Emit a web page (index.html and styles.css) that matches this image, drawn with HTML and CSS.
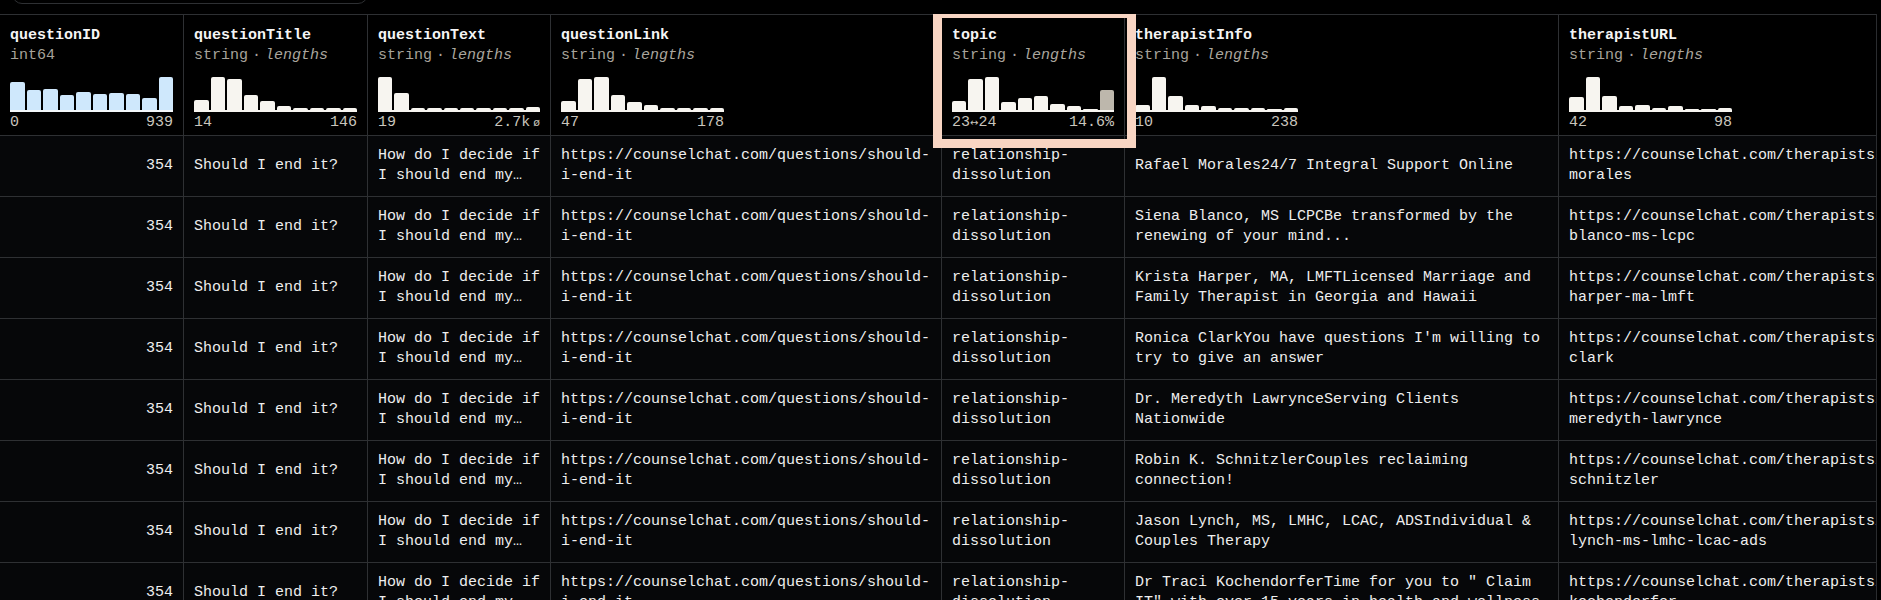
FILE: index.html
```html
<!DOCTYPE html>
<html lang="en">
<head>
<meta charset="utf-8">
<title>Dataset viewer</title>
<link rel="stylesheet" href="styles.css">
</head>
<body>
<div class="toolbar"><div class="search"></div></div>
<div class="viewer">
  <div class="table">
    <!-- header -->
    <div class="hcell">
      <div class="title">questionID</div>
      <div class="type">int64</div>
      <div class="hist blue">
        <i style="height:28px"></i><i style="height:20px"></i><i style="height:21px"></i><i style="height:15px"></i><i style="height:18px"></i><i style="height:16px"></i><i style="height:17px"></i><i style="height:16px"></i><i style="height:12px"></i><i style="height:33px"></i>
      </div>
      <div class="range"><span>0</span><span>939</span></div>
    </div>
    <div class="hcell">
      <div class="title">questionTitle</div>
      <div class="type">string<span class="sep">·</span><em>lengths</em></div>
      <div class="hist">
        <i style="height:10px"></i><i style="height:33px"></i><i style="height:31px"></i><i style="height:15px"></i><i style="height:9px"></i><i style="height:4px"></i><i style="height:2px"></i><i style="height:2px"></i><i style="height:2px"></i><i style="height:2px"></i>
      </div>
      <div class="range"><span>14</span><span>146</span></div>
    </div>
    <div class="hcell">
      <div class="title">questionText</div>
      <div class="type">string<span class="sep">·</span><em>lengths</em></div>
      <div class="hist">
        <i style="height:33px"></i><i style="height:17px"></i><i style="height:2px"></i><i style="height:2px"></i><i style="height:2px"></i><i style="height:2px"></i><i style="height:2px"></i><i style="height:2px"></i><i style="height:2px"></i><i style="height:3px"></i>
      </div>
      <div class="range"><span>19</span><span>2.7k<small class="null">ø</small></span></div>
    </div>
    <div class="hcell">
      <div class="title">questionLink</div>
      <div class="type">string<span class="sep">·</span><em>lengths</em></div>
      <div class="hist">
        <i style="height:9px"></i><i style="height:31px"></i><i style="height:33px"></i><i style="height:15px"></i><i style="height:8px"></i><i style="height:5px"></i><i style="height:2px"></i><i style="height:2px"></i><i style="height:2px"></i><i style="height:2px"></i>
      </div>
      <div class="range"><span>47</span><span>178</span></div>
    </div>
    <div class="hcell">
      <div class="title">topic</div>
      <div class="type">string<span class="sep">·</span><em>lengths</em></div>
      <div class="hist">
        <i style="height:9px"></i><i style="height:31px"></i><i style="height:33px"></i><i style="height:8px"></i><i style="height:12px"></i><i style="height:14px"></i><i style="height:6px"></i><i style="height:4px"></i><i style="height:1px"></i><i class="muted" style="height:20px"></i>
      </div>
      <div class="range"><span>23<small class="arrow">↔</small>24</span><span>14.6%</span></div>
    </div>
    <div class="hcell">
      <div class="title">therapistInfo</div>
      <div class="type">string<span class="sep">·</span><em>lengths</em></div>
      <div class="hist">
        <i style="height:5px"></i><i style="height:33px"></i><i style="height:14px"></i><i style="height:5px"></i><i style="height:4px"></i><i style="height:2px"></i><i style="height:2px"></i><i style="height:2px"></i><i style="height:1px"></i><i style="height:2px"></i>
      </div>
      <div class="range"><span>10</span><span>238</span></div>
    </div>
    <div class="hcell">
      <div class="title">therapistURL</div>
      <div class="type">string<span class="sep">·</span><em>lengths</em></div>
      <div class="hist">
        <i style="height:13px"></i><i style="height:33px"></i><i style="height:14px"></i><i style="height:4px"></i><i style="height:5px"></i><i style="height:2px"></i><i style="height:4px"></i><i style="height:1px"></i><i style="height:1px"></i><i style="height:2px"></i>
      </div>
      <div class="range"><span>42</span><span>98</span></div>
    </div>

    <!-- row 1 -->
    <div class="cell num">354</div>
    <div class="cell">Should I end it?</div>
    <div class="cell">How do I decide if I should end my…</div>
    <div class="cell">https://counselchat.com/questions/should-i-end-it</div>
    <div class="cell">relationship-dissolution</div>
    <div class="cell">Rafael Morales24/7 Integral Support Online</div>
    <div class="cell">https://counselchat.com/therapists/rafael-morales</div>
    <!-- row 2 -->
    <div class="cell num">354</div>
    <div class="cell">Should I end it?</div>
    <div class="cell">How do I decide if I should end my…</div>
    <div class="cell">https://counselchat.com/questions/should-i-end-it</div>
    <div class="cell">relationship-dissolution</div>
    <div class="cell">Siena Blanco, MS LCPCBe transformed by the renewing of your mind...</div>
    <div class="cell">https://counselchat.com/therapists/siena-blanco-ms-lcpc</div>
    <!-- row 3 -->
    <div class="cell num">354</div>
    <div class="cell">Should I end it?</div>
    <div class="cell">How do I decide if I should end my…</div>
    <div class="cell">https://counselchat.com/questions/should-i-end-it</div>
    <div class="cell">relationship-dissolution</div>
    <div class="cell">Krista Harper, MA, LMFTLicensed Marriage and Family Therapist in Georgia and Hawaii</div>
    <div class="cell">https://counselchat.com/therapists/krista-harper-ma-lmft</div>
    <!-- row 4 -->
    <div class="cell num">354</div>
    <div class="cell">Should I end it?</div>
    <div class="cell">How do I decide if I should end my…</div>
    <div class="cell">https://counselchat.com/questions/should-i-end-it</div>
    <div class="cell">relationship-dissolution</div>
    <div class="cell">Ronica ClarkYou have questions I'm willing to try to give an answer</div>
    <div class="cell">https://counselchat.com/therapists/ronica-clark</div>
    <!-- row 5 -->
    <div class="cell num">354</div>
    <div class="cell">Should I end it?</div>
    <div class="cell">How do I decide if I should end my…</div>
    <div class="cell">https://counselchat.com/questions/should-i-end-it</div>
    <div class="cell">relationship-dissolution</div>
    <div class="cell">Dr. Meredyth LawrynceServing Clients Nationwide</div>
    <div class="cell">https://counselchat.com/therapists/dr-meredyth-lawrynce</div>
    <!-- row 6 -->
    <div class="cell num">354</div>
    <div class="cell">Should I end it?</div>
    <div class="cell">How do I decide if I should end my…</div>
    <div class="cell">https://counselchat.com/questions/should-i-end-it</div>
    <div class="cell">relationship-dissolution</div>
    <div class="cell">Robin K. SchnitzlerCouples reclaiming connection!</div>
    <div class="cell">https://counselchat.com/therapists/robin-k-schnitzler</div>
    <!-- row 7 -->
    <div class="cell num">354</div>
    <div class="cell">Should I end it?</div>
    <div class="cell">How do I decide if I should end my…</div>
    <div class="cell">https://counselchat.com/questions/should-i-end-it</div>
    <div class="cell">relationship-dissolution</div>
    <div class="cell">Jason Lynch, MS, LMHC, LCAC, ADSIndividual &amp; Couples Therapy</div>
    <div class="cell">https://counselchat.com/therapists/jason-lynch-ms-lmhc-lcac-ads</div>
    <!-- row 8 -->
    <div class="cell num">354</div>
    <div class="cell">Should I end it?</div>
    <div class="cell">How do I decide if I should end my…</div>
    <div class="cell">https://counselchat.com/questions/should-i-end-it</div>
    <div class="cell">relationship-dissolution</div>
    <div class="cell"><span class="clamp">Dr Traci KochendorferTime for you to " Claim IT" with over 15 years in health and wellness experience</span></div>
    <div class="cell">https://counselchat.com/therapists/dr-traci-kochendorfer</div>
  </div>
  <div class="highlight"></div>
</div>
</body>
</html>
```

FILE: styles.css
```css
html, body {
  margin: 0;
  padding: 0;
  background: #000;
  height: 600px;
  overflow: hidden;
}

body {
  font-family: "Liberation Mono", "DejaVu Sans Mono", monospace;
  color: #ececec;
}

.toolbar {
  height: 14px;
  overflow: hidden;
}

.search {
  margin: -27px 0 0 12px;
  width: 354px;
  height: 29px;
  border: 1px solid #2e3033;
  border-radius: 10px;
}

.viewer {
  position: relative;
  width: 1876px;
  border-right: 1px solid #2a2c2f;
  overflow: hidden;
  height: 586px;
}

.table {
  display: grid;
  grid-template-columns: 184px 184px 183px 391px 183px 434px 434px;
  grid-auto-rows: 61px;
  grid-template-rows: 121px;
  border-top: 1px solid #2e3033;
  width: 1993px;
}

.hcell {
  background: #000;
  border-right: 1px solid #2e3033;
  border-bottom: 1px solid #2e3033;
  padding: 11px 10px 2px;
  line-height: 20px;
  font-size: 15px;
  min-width: 0;
}

.title {
  font-weight: bold;
  color: #f5f5f5;
  white-space: nowrap;
}

.type {
  color: #a7a39b;
  white-space: nowrap;
}

.type em {
  font-style: italic;
  color: #aaa69e;
}

.sep {
  margin: 0 4px;
}

.hist {
  margin-top: 10px;
  width: 163px;
  max-width: 100%;
  height: 34px;
  display: flex;
  align-items: flex-end;
  gap: 2px;
  border-bottom: 2px solid #f7f5f0;
}

.hist i {
  flex: 1;
  background: #f7f5f0;
  border-radius: 2px 2px 0 0;
}

.hist.blue {
  border-bottom-color: #f4f8fb;
}

.hist.blue i {
  background: #cfe8fc;
}

.hist i.muted {
  background: #bdb7ac;
}

.range {
  margin-top: 1px;
  width: 163px;
  max-width: 100%;
  display: flex;
  justify-content: space-between;
  color: #c9c5bd;
  white-space: nowrap;
}

.null {
  font-size: 11px;
  margin-left: 3px;
  font-family: "DejaVu Sans", sans-serif;
}

.arrow {
  font-size: 10px;
  font-family: "DejaVu Sans", sans-serif;
}

.cell {
  background: #060709;
  border-right: 1px solid #2e3033;
  border-bottom: 1px solid #2e3033;
  padding: 0 7px 0 10px;
  font-size: 15px;
  line-height: 20px;
  display: flex;
  align-items: center;
  min-width: 0;
  overflow: hidden;
  color: #eeeeee;
}

.cell.num {
  justify-content: flex-end;
  padding-right: 10px;
}

.clamp {
  display: -webkit-box;
  -webkit-box-orient: vertical;
  -webkit-line-clamp: 2;
  overflow: hidden;
}

.highlight {
  position: absolute;
  left: 933px;
  top: -5px;
  width: 185px;
  height: 121px;
  border: 9px solid #f8d5c3;
  pointer-events: none;
}
```
